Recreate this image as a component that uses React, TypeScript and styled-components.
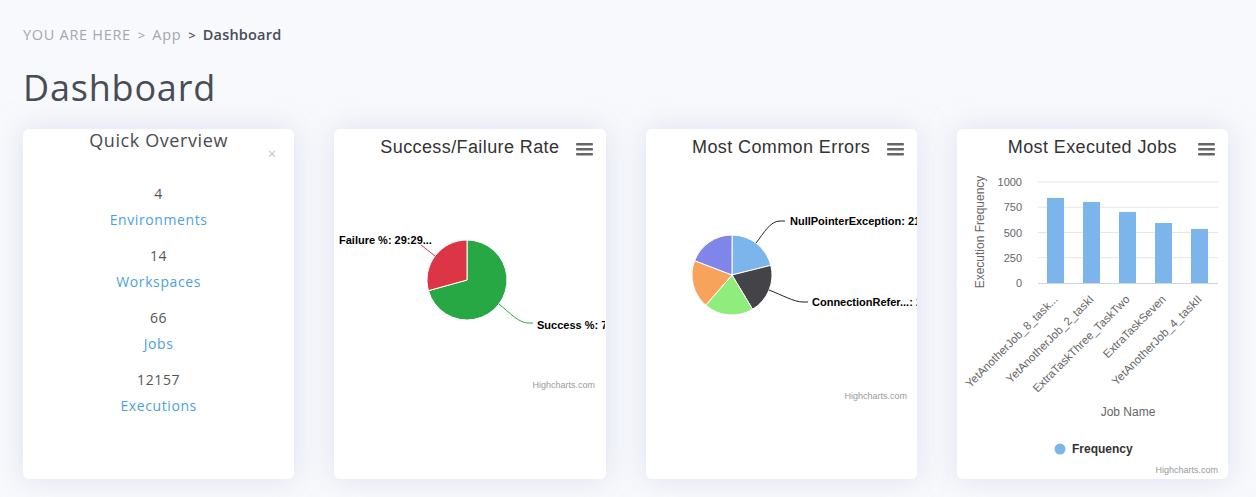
import React from "react";
import styled, { createGlobalStyle } from "styled-components";

const GlobalStyle = createGlobalStyle`
  html, body {
    margin: 0;
    padding: 0;
    background: #f8f9fc;
  }
  * {
    box-sizing: border-box;
  }
`;

const CHART_FONT = `"Liberation Sans", Arial, sans-serif`;
const PAGE_FONT = `"Open Sans", "Liberation Sans", sans-serif`;

const Page = styled.div`
  padding: 25px 28px 0 23px;
  font-family: ${PAGE_FONT};
  min-height: 497px;
`;

const Breadcrumb = styled.nav`
  display: flex;
  align-items: center;
  gap: 7px;
  font-size: 14.5px;
  line-height: 20px;
  letter-spacing: 0.7px;
  color: #a3a7b2;
`;

const Crumb = styled.span<{ $current?: boolean }>`
  color: ${(p) => (p.$current ? "#474c56" : "#a3a7b2")};
  font-weight: ${(p) => (p.$current ? 600 : 400)};
  letter-spacing: ${(p) => (p.$current ? "0.2px" : "0.7px")};
`;

const Separator = styled.span<{ $dark?: boolean }>`
  color: ${(p) => (p.$dark ? "#555" : "#9a9ea8")};
  font-weight: ${(p) => (p.$dark ? 600 : 400)};
  font-size: 13px;
  letter-spacing: 0;
`;

const PageTitle = styled.h1`
  margin: 21px 0 19px;
  font-size: 36px;
  line-height: 44px;
  font-weight: 400;
  letter-spacing: 0.8px;
  color: #474c56;
`;

const CardGrid = styled.div`
  display: grid;
  grid-template-columns: repeat(4, 1fr);
  gap: 40px;
`;

const Card = styled.section`
  position: relative;
  height: 350px;
  background: #fff;
  border-radius: 6px;
  overflow: hidden;
  box-shadow: 0 0 28px rgba(196, 205, 232, 0.55);
`;

const OverviewTitle = styled.h2`
  margin: 0;
  font-size: 18px;
  line-height: 22px;
  font-weight: 400;
  letter-spacing: 0.6px;
  text-align: center;
  color: #484b52;
`;

const CloseButton = styled.button`
  position: absolute;
  top: 17px;
  right: 18px;
  padding: 0;
  border: 0;
  background: none;
  color: #c4c4c4;
  font-size: 15px;
  line-height: 14px;
  font-family: ${PAGE_FONT};
  cursor: pointer;
`;

const StatList = styled.ul`
  list-style: none;
  margin: 33px 0 0;
  padding: 0;
  display: flex;
  flex-direction: column;
  gap: 16px;
  text-align: center;
`;

const Stat = styled.li`
  display: flex;
  flex-direction: column;
  gap: 6px;
  font-size: 14px;
  line-height: 20px;
  letter-spacing: 0.6px;
`;

const StatValue = styled.span`
  color: #555;
`;

const StatLabel = styled.a`
  color: #4e9fdc;
  text-decoration: none;
`;

const ChartHeader = styled.header`
  display: grid;
  grid-template-columns: 1fr auto 1fr;
  align-items: center;
  height: 40px;
  padding: 7px 13px 11px 13px;
`;

const ChartTitle = styled.h2`
  grid-column: 2;
  margin: 0;
  font-family: ${CHART_FONT};
  font-size: 18px;
  line-height: 22px;
  font-weight: 400;
  letter-spacing: 0.4px;
  color: #333;
  white-space: nowrap;
`;

const MenuButton = styled.button`
  grid-column: 3;
  justify-self: end;
  display: flex;
  padding: 0;
  margin-top: 4px;
  border: 0;
  background: none;
  cursor: pointer;
`;

const ChartSvg = styled.svg`
  display: block;
  font-family: ${CHART_FONT};
`;

const Credit = styled.text`
  font-size: 9px;
  fill: #999;
`;

const DataLabel = styled.text`
  font-size: 11px;
  font-weight: 700;
  fill: #000;
  paint-order: stroke;
  stroke: #fff;
  stroke-width: 2px;
`;

const AxisLabel = styled.text<{ $size?: number }>`
  font-size: ${(p) => p.$size ?? 11}px;
  fill: #666;
`;

const AxisTitle = styled.text`
  font-size: 12px;
  fill: #666;
`;

const LegendText = styled.text`
  font-size: 12px;
  font-weight: 700;
  fill: #333;
`;

type Slice = { value: number; color: string };

function slicePaths(cx: number, cy: number, r: number, data: Slice[]) {
  const total = data.reduce((s, d) => s + d.value, 0);
  let start = -Math.PI / 2;
  return data.map((d) => {
    const sweep = (d.value / total) * Math.PI * 2;
    const end = start + sweep;
    const x1 = cx + r * Math.cos(start);
    const y1 = cy + r * Math.sin(start);
    const x2 = cx + r * Math.cos(end);
    const y2 = cy + r * Math.sin(end);
    const large = sweep > Math.PI ? 1 : 0;
    const path = `M${cx} ${cy} L${x1} ${y1} A${r} ${r} 0 ${large} 1 ${x2} ${y2} Z`;
    start = end;
    return { path, color: d.color };
  });
}

function MenuIcon() {
  return (
    <svg width="17" height="13" viewBox="0 0 17 13">
      <rect x="0" y="0" width="17" height="2.4" rx="1" fill="#666" />
      <rect x="0" y="5" width="17" height="2.4" rx="1" fill="#666" />
      <rect x="0" y="10" width="17" height="2.4" rx="1" fill="#666" />
    </svg>
  );
}

function ChartCard({ title, children }: { title: string; children: React.ReactNode }) {
  return (
    <Card>
      <ChartHeader>
        <ChartTitle>{title}</ChartTitle>
        <MenuButton aria-label="Chart menu">
          <MenuIcon />
        </MenuButton>
      </ChartHeader>
      <ChartSvg width="271" height="310" viewBox="0 0 271 310">
        {children}
      </ChartSvg>
    </Card>
  );
}

const successData: Slice[] = [
  { value: 70.71, color: "#28a745" },
  { value: 29.29, color: "#dc3545" },
];

const errorData: Slice[] = [
  { value: 76, color: "#7cb5ec" },
  { value: 73, color: "#434348" },
  { value: 72, color: "#90ed7d" },
  { value: 70, color: "#f7a35c" },
  { value: 69, color: "#8085e9" },
];

const jobs = [
  { name: "YetAnotherJob_8_task...", value: 842 },
  { name: "YetAnotherJob_2_taskI", value: 802 },
  { name: "ExtraTaskThree_TaskTwo", value: 703 },
  { name: "ExtraTaskSeven", value: 594 },
  { name: "YetAnotherJob_4_taskII", value: 535 },
];

const stats = [
  { value: "4", label: "Environments" },
  { value: "14", label: "Workspaces" },
  { value: "66", label: "Jobs" },
  { value: "12157", label: "Executions" },
];

function SuccessChart() {
  return (
    <ChartCard title="Success/Failure Rate">
      {slicePaths(133, 111, 40, successData).map((s, i) => (
        <path key={i} d={s.path} fill={s.color} stroke="#fff" strokeWidth="1" />
      ))}
      <path d="M101 87 L82 72 L77 71" fill="none" stroke="#dc3545" strokeWidth="1" />
      <path d="M165 135 C176 144 185 154 194 154 L199 154" fill="none" stroke="#28a745" strokeWidth="1" />
      <DataLabel x="5" y="75">Failure %: 29:29...</DataLabel>
      <DataLabel x="203" y="160">Success %: 70.71%</DataLabel>
      <Credit x="261" y="219" textAnchor="end">Highcharts.com</Credit>
    </ChartCard>
  );
}

function ErrorsChart() {
  return (
    <ChartCard title="Most Common Errors">
      {slicePaths(86, 106, 40, errorData).map((s, i) => (
        <path key={i} d={s.path} fill={s.color} stroke="#fff" strokeWidth="1" />
      ))}
      <path d="M110 74 C118 64 124 52 134 52 L139 52" fill="none" stroke="#222" strokeWidth="1" />
      <path d="M123 121 C136 126 148 133 157 133 L162 133" fill="none" stroke="#222" strokeWidth="1" />
      <DataLabel x="144" y="56">NullPointerException: 21.1%</DataLabel>
      <DataLabel x="166" y="137">ConnectionRefer...: 20.3%</DataLabel>
      <Credit x="261" y="230" textAnchor="end">Highcharts.com</Credit>
    </ChartCard>
  );
}

function JobsChart() {
  const ticks = [1000, 750, 500, 250, 0];
  const zeroY = 114;
  const scale = 101 / 1000;
  return (
    <ChartCard title="Most Executed Jobs">
      <AxisTitle transform="translate(27 63) rotate(-90)" textAnchor="middle">
        Execution Frequency
      </AxisTitle>
      {ticks.map((t) => {
        const y = zeroY - t * scale;
        return (
          <g key={t}>
            {t !== 0 && <line x1="81" x2="261" y1={y} y2={y} stroke="#e6e6e6" strokeWidth="1" />}
            <AxisLabel x="65" y={y + 4} textAnchor="end">
              {t}
            </AxisLabel>
          </g>
        );
      })}
      {jobs.map((j, i) => {
        const x = 90 + i * 36;
        const h = j.value * scale;
        return <rect key={j.name} x={x} y={zeroY - h} width="17" height={h} fill="#7cb5ec" />;
      })}
      <line x1="81" x2="261" y1={zeroY + 0.5} y2={zeroY + 0.5} stroke="#ccd6eb" strokeWidth="1" />
      {jobs.map((j, i) => {
        const cx = 98.5 + i * 36 + 3;
        return (
          <AxisLabel
            key={j.name}
            $size={11.5}
            textAnchor="end"
            transform={`translate(${cx} 131) rotate(-45)`}
          >
            {j.name}
          </AxisLabel>
        );
      })}
      <AxisTitle x="171" y="247" textAnchor="middle">
        Job Name
      </AxisTitle>
      <circle cx="103" cy="280" r="5.5" fill="#7cb5ec" />
      <LegendText x="115" y="284">
        Frequency
      </LegendText>
      <Credit x="261" y="304" textAnchor="end">Highcharts.com</Credit>
    </ChartCard>
  );
}

export default function App() {
  return (
    <>
      <GlobalStyle />
      <Page>
        <Breadcrumb>
          <Crumb>YOU ARE HERE</Crumb>
          <Separator>&gt;</Separator>
          <Crumb>App</Crumb>
          <Separator $dark>&gt;</Separator>
          <Crumb $current>Dashboard</Crumb>
        </Breadcrumb>
        <PageTitle>Dashboard</PageTitle>
        <CardGrid>
          <Card>
            <OverviewTitle>Quick Overview</OverviewTitle>
            <CloseButton aria-label="Close">×</CloseButton>
            <StatList>
              {stats.map((s) => (
                <Stat key={s.label}>
                  <StatValue>{s.value}</StatValue>
                  <StatLabel href="#">{s.label}</StatLabel>
                </Stat>
              ))}
            </StatList>
          </Card>
          <SuccessChart />
          <ErrorsChart />
          <JobsChart />
        </CardGrid>
      </Page>
    </>
  );
}
